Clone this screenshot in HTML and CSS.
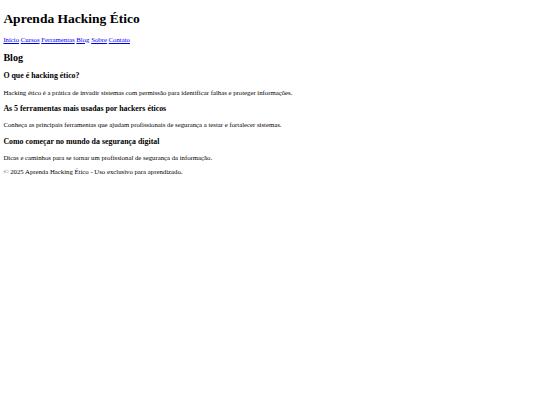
FILE: index.html
```html
<!DOCTYPE html>
<html lang="pt-BR">
<head>
<meta charset="utf-8">
<title>Aprenda Hacking Ético</title>
<link rel="stylesheet" href="styles.css">
</head>
<body class="page">
<header class="site-header">
<h1 class="site-title">Aprenda Hacking Ético</h1>
<nav class="site-nav">
<a href="#" class="nav-link">Início</a>
<a href="#" class="nav-link">Cursos</a>
<a href="#" class="nav-link">Ferramentas</a>
<a href="#" class="nav-link">Blog</a>
<a href="#" class="nav-link">Sobre</a>
<a href="#" class="nav-link">Contato</a>
</nav>
</header>
<main class="blog">
<h2 class="section-title">Blog</h2>
<article class="post">
<h3 class="post-title">O que é hacking ético?</h3>
<p class="post-text">Hacking ético é a prática de invadir sistemas com permissão para identificar falhas e proteger informações.</p>
</article>
<article class="post">
<h3 class="post-title">As 5 ferramentas mais usadas por hackers éticos</h3>
<p class="post-text">Conheça as principais ferramentas que ajudam profissionais de segurança a testar e fortalecer sistemas.</p>
</article>
<article class="post">
<h3 class="post-title">Como começar no mundo da segurança digital</h3>
<p class="post-text">Dicas e caminhos para se tornar um profissional de segurança da informação.</p>
</article>
</main>
<footer class="site-footer">
<p class="footer-text">© 2025 Aprenda Hacking Ético - Uso exclusivo para aprendizado.</p>
</footer>
</body>
</html>
```
FILE: styles.css
```css
html {
  background: #ffffff;
}
.page {
  margin: 3.375px;
  font-family: "Liberation Serif", "Times New Roman", serif;
  font-size: 6.75px;
  line-height: 7.594px;
  color: #000000;
}
.site-title {
  font-size: 13.5px;
  line-height: 15.61px;
  font-weight: bold;
  margin: 8px 0 8.6px;
}
.nav-link {
  color: #0000ee;
  text-decoration: underline;
}
.section-title {
  font-size: 10.125px;
  line-height: 11.39px;
  font-weight: bold;
  margin: 8.404px 0;
}
.post-title {
  font-size: 7.898px;
  line-height: 9.28px;
  font-weight: bold;
  margin: 7.898px 0;
}
.post-text,
.footer-text {
  margin: 6.75px 0;
}
```
